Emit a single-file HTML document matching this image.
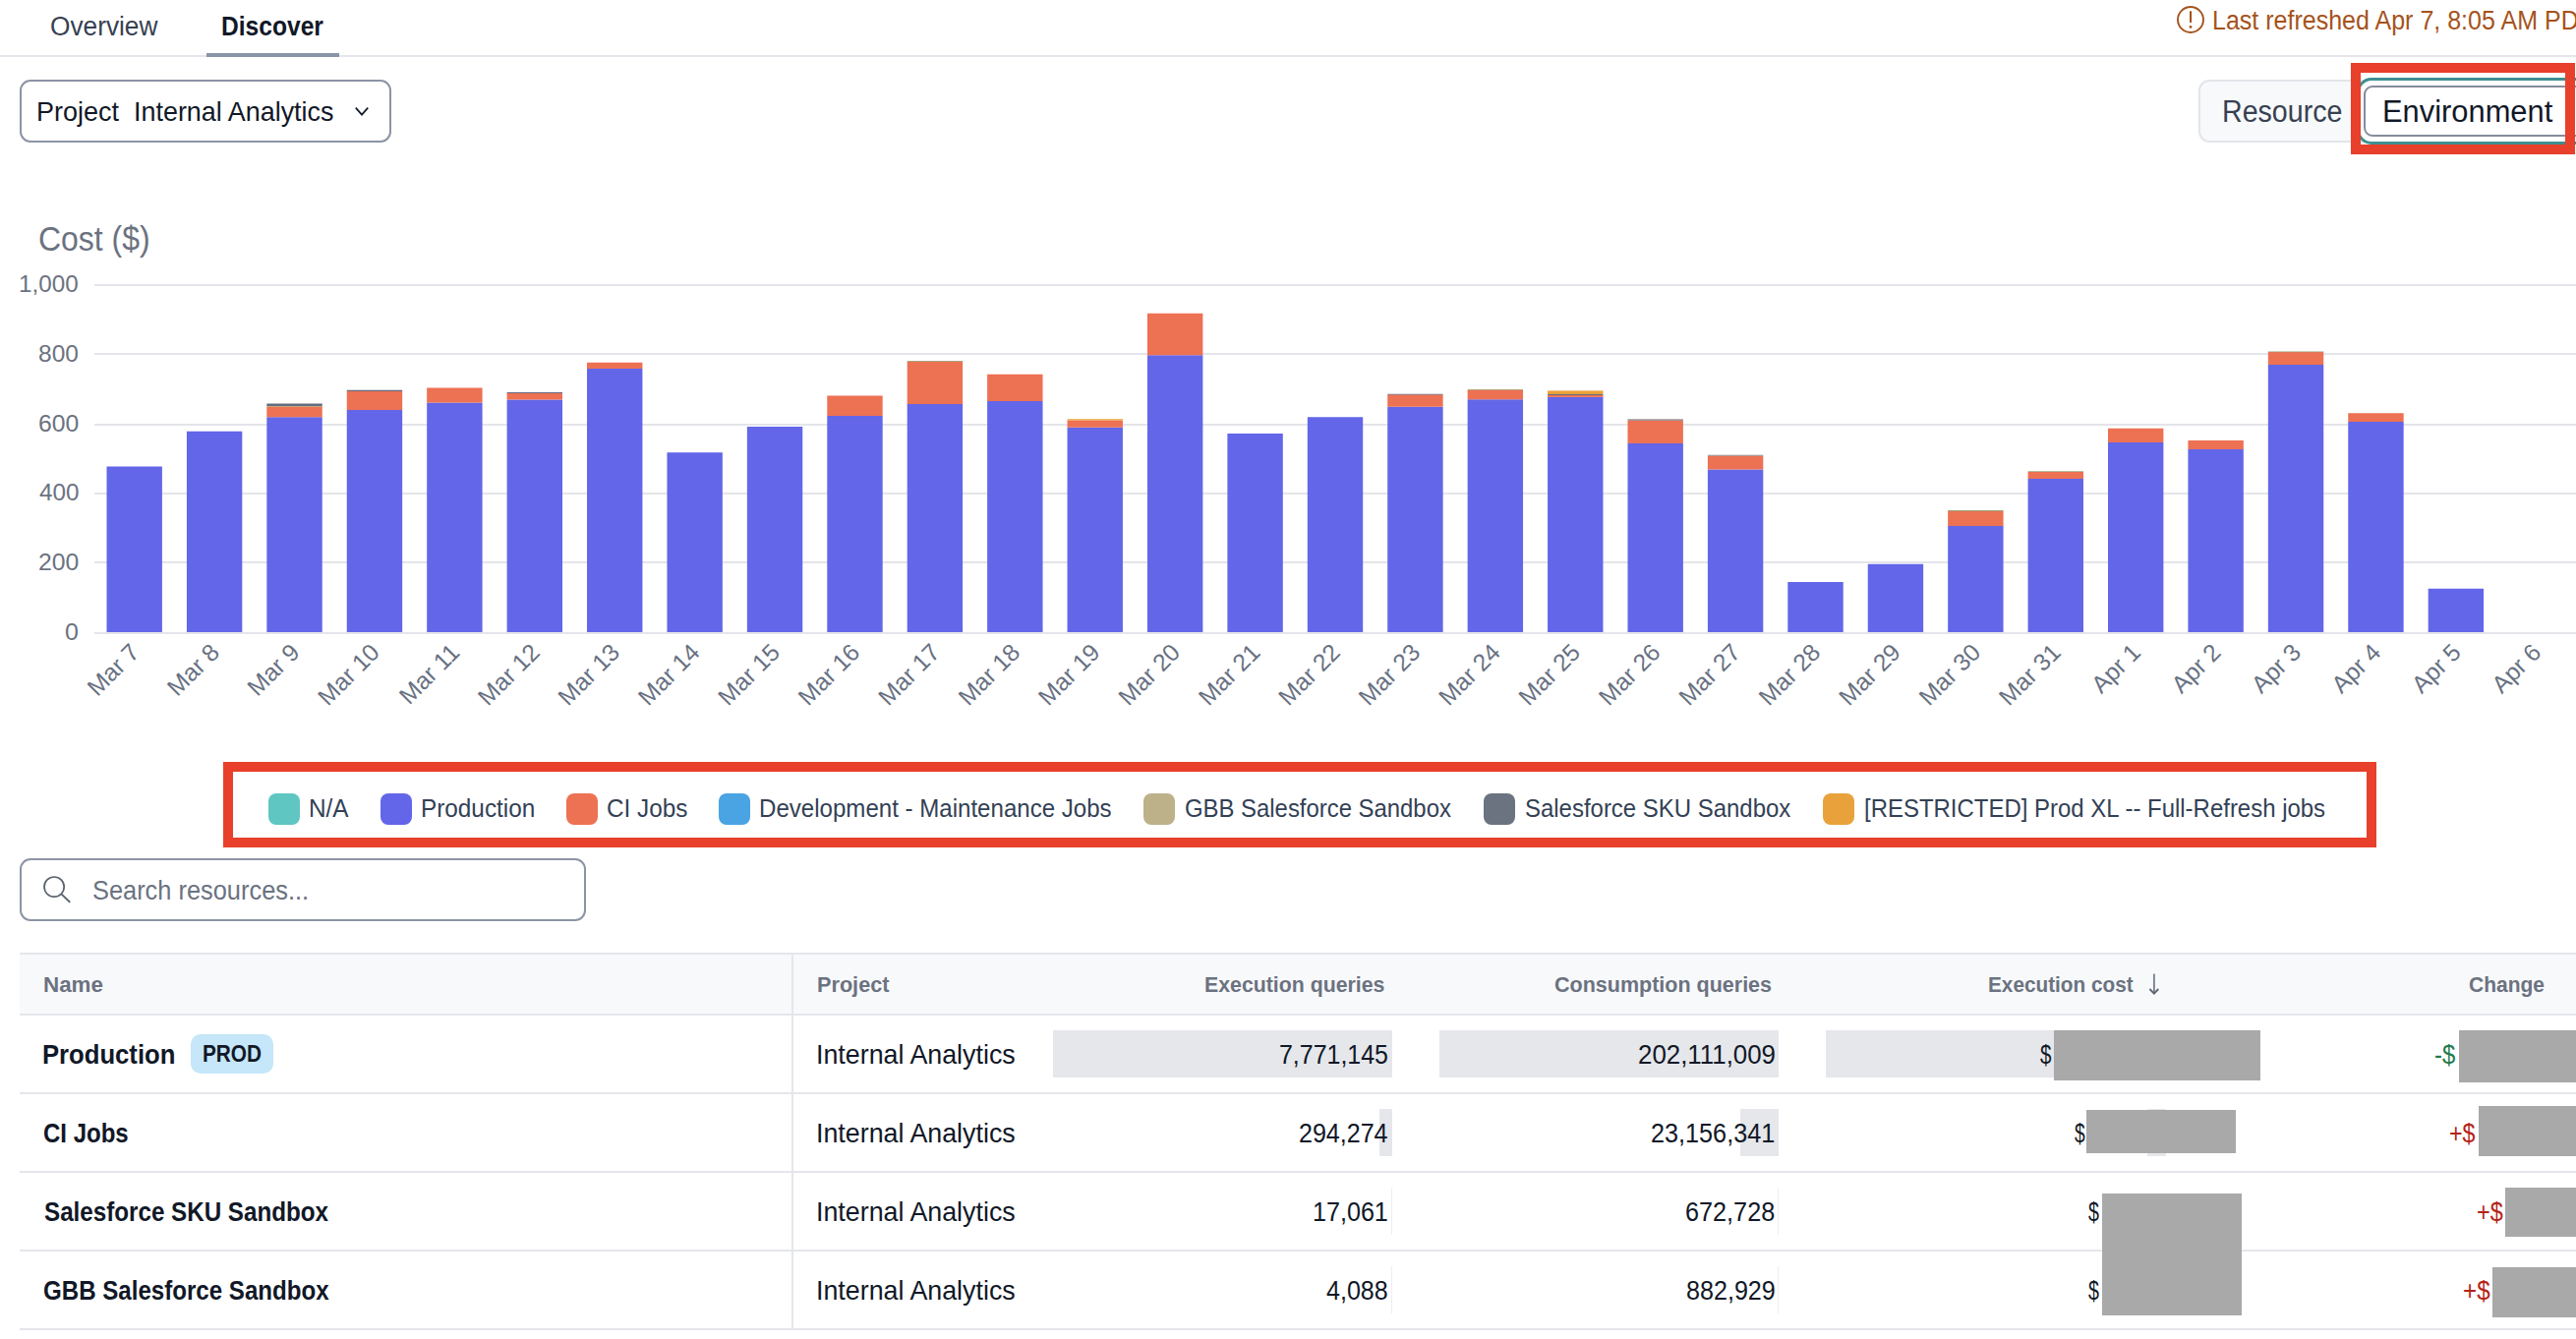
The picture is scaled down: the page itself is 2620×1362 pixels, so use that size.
<!DOCTYPE html>
<html><head><meta charset="utf-8"><title>Discover</title>
<style>
html,body{margin:0;padding:0;background:#fff;width:2620px;height:1362px;overflow:hidden;position:relative;font-family:'Liberation Sans', sans-serif;}
.b{position:absolute;}
.t{position:absolute;white-space:nowrap;transform-origin:0 0;}
.ic{position:absolute;overflow:visible}
.chart{position:absolute;left:0;top:0}
</style></head><body>
<div class="b" style="left:0px;top:56px;width:2620px;height:2px;background:#e4e6eb"></div><div class="b" style="left:210px;top:54px;width:135px;height:4px;background:#8a94a6"></div><div class="b" style="left:20px;top:81px;width:378px;height:64px;border:2px solid #8c94a4;border-radius:11px;box-sizing:border-box;background:#fff"></div><div class="b" style="left:2236px;top:81px;width:420px;height:64px;border:2px solid #e3e5e9;border-radius:11px;box-sizing:border-box;background:#f8f9fb"></div><div class="b" style="left:2397px;top:79px;width:243px;height:68px;border:3.6px solid #3f8f90;border-radius:15px;box-sizing:border-box;background:#fff"></div><div class="b" style="left:2404px;top:87px;width:232px;height:52px;border:2px solid #868c9c;border-radius:9px;box-sizing:border-box;background:#fff"></div><div class="b" style="left:2391px;top:64px;width:228px;height:93px;border:10px solid #e8402a;box-sizing:border-box"></div><div class="b" style="left:227px;top:775px;width:2190px;height:87px;border:10px solid #e8402a;box-sizing:border-box"></div><div class="b" style="left:273px;top:806.75px;width:32px;height:32px;background:#5fc6c2;border-radius:8px"></div><div class="b" style="left:387px;top:806.75px;width:32px;height:32px;background:#6366e8;border-radius:8px"></div><div class="b" style="left:576.25px;top:806.75px;width:32px;height:32px;background:#ed7153;border-radius:8px"></div><div class="b" style="left:731.25px;top:806.75px;width:32px;height:32px;background:#4aa3e3;border-radius:8px"></div><div class="b" style="left:1163px;top:806.75px;width:32px;height:32px;background:#bcb188;border-radius:8px"></div><div class="b" style="left:1509.25px;top:806.75px;width:32px;height:32px;background:#6b7280;border-radius:8px"></div><div class="b" style="left:1854.25px;top:806.75px;width:32px;height:32px;background:#e9a23b;border-radius:8px"></div><div class="b" style="left:20px;top:873px;width:576px;height:64px;border:2px solid #8c94a4;border-radius:11px;box-sizing:border-box;background:#fff"></div><div class="b" style="left:20px;top:971px;width:2600px;height:61px;background:#f8f9fb"></div><div class="b" style="left:20px;top:969px;width:2600px;height:2px;background:#e4e6eb"></div><div class="b" style="left:20px;top:1031px;width:2600px;height:2px;background:#e4e6eb"></div><div class="b" style="left:20px;top:1111px;width:2600px;height:2px;background:#e4e6eb"></div><div class="b" style="left:20px;top:1191px;width:2600px;height:2px;background:#e4e6eb"></div><div class="b" style="left:20px;top:1271px;width:2600px;height:2px;background:#e4e6eb"></div><div class="b" style="left:20px;top:1351px;width:2600px;height:2px;background:#e4e6eb"></div><div class="b" style="left:805px;top:971px;width:2px;height:381px;background:#e4e6eb"></div><div class="b" style="left:194px;top:1052px;width:84px;height:40px;background:#c6e6f9;border-radius:10px"></div><div class="b" style="left:1071px;top:1048px;width:345px;height:48px;background:#e5e7eb"></div><div class="b" style="left:1464px;top:1048px;width:345px;height:48px;background:#e5e7eb"></div><div class="b" style="left:1857px;top:1048px;width:442px;height:48px;background:#e5e7eb"></div><div class="b" style="left:1403px;top:1128px;width:13px;height:48px;background:#e5e7eb"></div><div class="b" style="left:1770px;top:1128px;width:39px;height:48px;background:#e5e7eb"></div><div class="b" style="left:2184px;top:1128px;width:19px;height:48px;background:#e5e7eb"></div><div class="b" style="left:1414.5px;top:1208px;width:1px;height:48px;background:#eceef1"></div><div class="b" style="left:1808px;top:1208px;width:1px;height:48px;background:#eceef1"></div><div class="b" style="left:1415px;top:1288px;width:1px;height:48px;background:#eceef1"></div><div class="b" style="left:1808px;top:1288px;width:1px;height:48px;background:#eceef1"></div><div class="b" style="left:2089px;top:1048px;width:210px;height:51px;background:#a9a9a9"></div><div class="b" style="left:2501px;top:1048px;width:119px;height:53px;background:#a9a9a9"></div><div class="b" style="left:2122px;top:1129px;width:152px;height:44px;background:#a9a9a9"></div><div class="b" style="left:2521px;top:1125px;width:99px;height:51px;background:#a9a9a9"></div><div class="b" style="left:2138px;top:1214px;width:142px;height:124px;background:#a9a9a9"></div><div class="b" style="left:2548px;top:1208px;width:72px;height:50px;background:#a9a9a9"></div><div class="b" style="left:2535px;top:1289px;width:85px;height:51px;background:#a9a9a9"></div>
<svg class="chart" width="2620" height="720" viewBox="0 0 2620 720"><g font-family="Liberation Sans, sans-serif" font-size="23.5" fill="#687182"><rect x="96" y="289" width="2524" height="2" fill="#e4e5ea"/><rect x="96" y="359" width="2524" height="2" fill="#e4e5ea"/><rect x="96" y="431" width="2524" height="2" fill="#e4e5ea"/><rect x="96" y="501" width="2524" height="2" fill="#e4e5ea"/><rect x="96" y="571" width="2524" height="2" fill="#e4e5ea"/><rect x="108.50" y="474.50" width="56.4" height="168.50" fill="#6366e8"/><rect x="189.92" y="438.75" width="56.4" height="204.25" fill="#6366e8"/><rect x="271.34" y="424.25" width="56.4" height="218.75" fill="#6366e8"/><rect x="271.34" y="413.50" width="56.4" height="10.75" fill="#ed7153"/><rect x="271.34" y="410.50" width="56.4" height="2.50" fill="#636b7e"/><rect x="271.34" y="413.00" width="56.4" height="1.00" fill="#c9a77a"/><rect x="352.76" y="417.00" width="56.4" height="226.00" fill="#6366e8"/><rect x="352.76" y="398.00" width="56.4" height="19.00" fill="#ed7153"/><rect x="352.76" y="396.75" width="56.4" height="1.25" fill="#636b7e"/><rect x="434.18" y="409.50" width="56.4" height="233.50" fill="#6366e8"/><rect x="434.18" y="394.50" width="56.4" height="15.00" fill="#ed7153"/><rect x="515.60" y="406.50" width="56.4" height="236.50" fill="#6366e8"/><rect x="515.60" y="400.00" width="56.4" height="6.50" fill="#ed7153"/><rect x="515.60" y="399.00" width="56.4" height="1.00" fill="#636b7e"/><rect x="597.02" y="375.00" width="56.4" height="268.00" fill="#6366e8"/><rect x="597.02" y="368.75" width="56.4" height="6.25" fill="#ed7153"/><rect x="678.44" y="460.25" width="56.4" height="182.75" fill="#6366e8"/><rect x="759.86" y="434.00" width="56.4" height="209.00" fill="#6366e8"/><rect x="841.28" y="423.00" width="56.4" height="220.00" fill="#6366e8"/><rect x="841.28" y="402.50" width="56.4" height="20.50" fill="#ed7153"/><rect x="922.70" y="411.00" width="56.4" height="232.00" fill="#6366e8"/><rect x="922.70" y="367.50" width="56.4" height="43.50" fill="#ed7153"/><rect x="922.70" y="367.00" width="56.4" height="0.80" fill="#9aa27a"/><rect x="1004.12" y="408.00" width="56.4" height="235.00" fill="#6366e8"/><rect x="1004.12" y="380.75" width="56.4" height="27.25" fill="#ed7153"/><rect x="1085.54" y="434.75" width="56.4" height="208.25" fill="#6366e8"/><rect x="1085.54" y="427.50" width="56.4" height="7.25" fill="#ed7153"/><rect x="1085.54" y="426.25" width="56.4" height="1.25" fill="#e9a23b"/><rect x="1166.96" y="361.25" width="56.4" height="281.75" fill="#6366e8"/><rect x="1166.96" y="318.75" width="56.4" height="42.50" fill="#ed7153"/><rect x="1248.38" y="441.00" width="56.4" height="202.00" fill="#6366e8"/><rect x="1329.80" y="424.25" width="56.4" height="218.75" fill="#6366e8"/><rect x="1411.22" y="413.75" width="56.4" height="229.25" fill="#6366e8"/><rect x="1411.22" y="401.25" width="56.4" height="12.50" fill="#ed7153"/><rect x="1411.22" y="400.75" width="56.4" height="0.75" fill="#636b7e"/><rect x="1492.64" y="406.25" width="56.4" height="236.75" fill="#6366e8"/><rect x="1492.64" y="397.00" width="56.4" height="9.25" fill="#ed7153"/><rect x="1492.64" y="396.00" width="56.4" height="1.00" fill="#b9a27a"/><rect x="1574.06" y="403.90" width="56.4" height="239.10" fill="#6366e8"/><rect x="1574.06" y="402.00" width="56.4" height="1.90" fill="#ed7153"/><rect x="1574.06" y="401.00" width="56.4" height="1.00" fill="#636b7e"/><rect x="1574.06" y="397.40" width="56.4" height="3.60" fill="#e9a23b"/><rect x="1655.48" y="451.00" width="56.4" height="192.00" fill="#6366e8"/><rect x="1655.48" y="427.90" width="56.4" height="23.10" fill="#ed7153"/><rect x="1655.48" y="426.30" width="56.4" height="1.60" fill="#9c8a8a"/><rect x="1736.90" y="477.50" width="56.4" height="165.50" fill="#6366e8"/><rect x="1736.90" y="463.80" width="56.4" height="13.70" fill="#ed7153"/><rect x="1736.90" y="462.70" width="56.4" height="1.10" fill="#9c8a8a"/><rect x="1818.32" y="592.00" width="56.4" height="51.00" fill="#6366e8"/><rect x="1899.74" y="573.75" width="56.4" height="69.25" fill="#6366e8"/><rect x="1981.16" y="535.00" width="56.4" height="108.00" fill="#6366e8"/><rect x="1981.16" y="520.00" width="56.4" height="15.00" fill="#ed7153"/><rect x="1981.16" y="519.00" width="56.4" height="1.00" fill="#9aa27a"/><rect x="2062.58" y="487.00" width="56.4" height="156.00" fill="#6366e8"/><rect x="2062.58" y="480.00" width="56.4" height="7.00" fill="#ed7153"/><rect x="2062.58" y="479.30" width="56.4" height="0.70" fill="#9aa27a"/><rect x="2144.00" y="450.00" width="56.4" height="193.00" fill="#6366e8"/><rect x="2144.00" y="435.75" width="56.4" height="14.25" fill="#ed7153"/><rect x="2225.42" y="457.00" width="56.4" height="186.00" fill="#6366e8"/><rect x="2225.42" y="448.00" width="56.4" height="9.00" fill="#ed7153"/><rect x="2306.84" y="371.00" width="56.4" height="272.00" fill="#6366e8"/><rect x="2306.84" y="358.00" width="56.4" height="13.00" fill="#ed7153"/><rect x="2306.84" y="357.50" width="56.4" height="0.70" fill="#9aa27a"/><rect x="2388.26" y="429.00" width="56.4" height="214.00" fill="#6366e8"/><rect x="2388.26" y="420.25" width="56.4" height="8.75" fill="#ed7153"/><rect x="2469.68" y="598.75" width="56.4" height="44.25" fill="#6366e8"/><rect x="96" y="643" width="2524" height="2" fill="#e4e5ea"/><text x="143.20" y="665.0" font-size="24.5" text-anchor="end" transform="rotate(-45 143.20 665.0)">Mar 7</text><text x="224.62" y="665.0" font-size="24.5" text-anchor="end" transform="rotate(-45 224.62 665.0)">Mar 8</text><text x="306.04" y="665.0" font-size="24.5" text-anchor="end" transform="rotate(-45 306.04 665.0)">Mar 9</text><text x="387.46" y="665.0" font-size="24.5" text-anchor="end" transform="rotate(-45 387.46 665.0)">Mar 10</text><text x="468.88" y="665.0" font-size="24.5" text-anchor="end" transform="rotate(-45 468.88 665.0)">Mar 11</text><text x="550.30" y="665.0" font-size="24.5" text-anchor="end" transform="rotate(-45 550.30 665.0)">Mar 12</text><text x="631.72" y="665.0" font-size="24.5" text-anchor="end" transform="rotate(-45 631.72 665.0)">Mar 13</text><text x="713.14" y="665.0" font-size="24.5" text-anchor="end" transform="rotate(-45 713.14 665.0)">Mar 14</text><text x="794.56" y="665.0" font-size="24.5" text-anchor="end" transform="rotate(-45 794.56 665.0)">Mar 15</text><text x="875.98" y="665.0" font-size="24.5" text-anchor="end" transform="rotate(-45 875.98 665.0)">Mar 16</text><text x="957.40" y="665.0" font-size="24.5" text-anchor="end" transform="rotate(-45 957.40 665.0)">Mar 17</text><text x="1038.82" y="665.0" font-size="24.5" text-anchor="end" transform="rotate(-45 1038.82 665.0)">Mar 18</text><text x="1120.24" y="665.0" font-size="24.5" text-anchor="end" transform="rotate(-45 1120.24 665.0)">Mar 19</text><text x="1201.66" y="665.0" font-size="24.5" text-anchor="end" transform="rotate(-45 1201.66 665.0)">Mar 20</text><text x="1283.08" y="665.0" font-size="24.5" text-anchor="end" transform="rotate(-45 1283.08 665.0)">Mar 21</text><text x="1364.50" y="665.0" font-size="24.5" text-anchor="end" transform="rotate(-45 1364.50 665.0)">Mar 22</text><text x="1445.92" y="665.0" font-size="24.5" text-anchor="end" transform="rotate(-45 1445.92 665.0)">Mar 23</text><text x="1527.34" y="665.0" font-size="24.5" text-anchor="end" transform="rotate(-45 1527.34 665.0)">Mar 24</text><text x="1608.76" y="665.0" font-size="24.5" text-anchor="end" transform="rotate(-45 1608.76 665.0)">Mar 25</text><text x="1690.18" y="665.0" font-size="24.5" text-anchor="end" transform="rotate(-45 1690.18 665.0)">Mar 26</text><text x="1771.60" y="665.0" font-size="24.5" text-anchor="end" transform="rotate(-45 1771.60 665.0)">Mar 27</text><text x="1853.02" y="665.0" font-size="24.5" text-anchor="end" transform="rotate(-45 1853.02 665.0)">Mar 28</text><text x="1934.44" y="665.0" font-size="24.5" text-anchor="end" transform="rotate(-45 1934.44 665.0)">Mar 29</text><text x="2015.86" y="665.0" font-size="24.5" text-anchor="end" transform="rotate(-45 2015.86 665.0)">Mar 30</text><text x="2097.28" y="665.0" font-size="24.5" text-anchor="end" transform="rotate(-45 2097.28 665.0)">Mar 31</text><text x="2178.70" y="665.0" font-size="24.5" text-anchor="end" transform="rotate(-45 2178.70 665.0)">Apr 1</text><text x="2260.12" y="665.0" font-size="24.5" text-anchor="end" transform="rotate(-45 2260.12 665.0)">Apr 2</text><text x="2341.54" y="665.0" font-size="24.5" text-anchor="end" transform="rotate(-45 2341.54 665.0)">Apr 3</text><text x="2422.96" y="665.0" font-size="24.5" text-anchor="end" transform="rotate(-45 2422.96 665.0)">Apr 4</text><text x="2504.38" y="665.0" font-size="24.5" text-anchor="end" transform="rotate(-45 2504.38 665.0)">Apr 5</text><text x="2585.80" y="665.0" font-size="24.5" text-anchor="end" transform="rotate(-45 2585.80 665.0)">Apr 6</text></g></svg>
<svg class="ic" style="left:2212px;top:4px" width="32" height="32" viewBox="0 0 32 32"><circle cx="16" cy="16" r="13" fill="none" stroke="#a5531c" stroke-width="1.9"/><rect x="15" y="7.3" width="2.1" height="11.6" fill="#a5531c"/><circle cx="16" cy="23.4" r="1.4" fill="#a5531c"/></svg><svg class="ic" style="left:356px;top:104px" width="24" height="20" viewBox="0 0 24 20"><path d="M5.8 5.6 L12 12.6 L18.2 5.6" fill="none" stroke="#111827" stroke-width="1.7"/></svg><svg class="ic" style="left:40px;top:886px" width="40" height="40" viewBox="0 0 40 40"><circle cx="15.1" cy="16.1" r="10.1" fill="none" stroke="#5b6270" stroke-width="1.7"/><path d="M22.4 23.4 L31.2 31.8" stroke="#5b6270" stroke-width="1.9"/></svg><svg class="ic" style="left:2180px;top:988px" width="24" height="28" viewBox="0 0 24 28"><path d="M10.9 2.6 L10.9 21.5" stroke="#7b8290" stroke-width="1.9"/><path d="M6.4 18.0 L10.9 22.6 L15.3 18.0" fill="none" stroke="#5f6775" stroke-width="1.9"/></svg>
<span class="t" style="left:51.27px;top:13.50px;font-size:27px;line-height:27px;color:#374151;font-weight:normal;transform:scaleX(0.9723);">Overview</span><span class="t" style="left:225.46px;top:13.50px;font-size:27px;line-height:27px;color:#111827;font-weight:bold;transform:scaleX(0.9108);">Discover</span><span class="t" style="left:36.89px;top:99.50px;font-size:28px;line-height:28px;color:#111827;font-weight:normal;transform:scaleX(0.9641);">Project</span><span class="t" style="left:135.90px;top:99.50px;font-size:28px;line-height:28px;color:#111827;font-weight:normal;transform:scaleX(0.9612);">Internal Analytics</span><span class="t" style="left:2249.95px;top:8.30px;font-size:27px;line-height:27px;color:#a5531c;font-weight:normal;transform:scaleX(0.9266);">Last refreshed Apr 7, 8:05 AM PDT</span><span class="t" style="left:2260.27px;top:99.40px;font-size:30.8px;line-height:30.8px;color:#374151;font-weight:normal;transform:scaleX(0.9285);">Resource</span><span class="t" style="left:2422.59px;top:99.40px;font-size:30.8px;line-height:30.8px;color:#111827;font-weight:normal;transform:scaleX(1.0023);">Environment</span><span class="t" style="left:39.00px;top:226.05px;font-size:35.5px;line-height:35.5px;color:#6b7280;font-weight:normal;transform:scaleX(0.9003);">Cost ($)</span><span class="t" style="left:19.49px;top:276.50px;font-size:24px;line-height:24px;color:#6b7280;font-weight:normal;transform:scaleX(1.0093);">1,000</span><span class="t" style="left:39.23px;top:347.50px;font-size:24px;line-height:24px;color:#6b7280;font-weight:normal;transform:scaleX(1.0208);">800</span><span class="t" style="left:38.84px;top:418.50px;font-size:24px;line-height:24px;color:#6b7280;font-weight:normal;transform:scaleX(1.0308);">600</span><span class="t" style="left:39.62px;top:489.00px;font-size:24px;line-height:24px;color:#6b7280;font-weight:normal;transform:scaleX(1.0110);">400</span><span class="t" style="left:38.84px;top:559.50px;font-size:24px;line-height:24px;color:#6b7280;font-weight:normal;transform:scaleX(1.0308);">200</span><span class="t" style="left:66.22px;top:630.50px;font-size:24px;line-height:24px;color:#6b7280;font-weight:normal;transform:scaleX(1.0417);">0</span><span class="t" style="left:314.35px;top:809.75px;font-size:25px;line-height:25px;color:#334155;font-weight:normal;transform:scaleX(0.9725);">N/A</span><span class="t" style="left:428.10px;top:809.75px;font-size:25px;line-height:25px;color:#334155;font-weight:normal;transform:scaleX(0.9728);">Production</span><span class="t" style="left:617.11px;top:809.75px;font-size:25px;line-height:25px;color:#334155;font-weight:normal;transform:scaleX(0.9722);">CI Jobs</span><span class="t" style="left:772.12px;top:809.75px;font-size:25px;line-height:25px;color:#334155;font-weight:normal;transform:scaleX(0.9630);">Development - Maintenance Jobs</span><span class="t" style="left:1205.13px;top:809.75px;font-size:25px;line-height:25px;color:#334155;font-weight:normal;transform:scaleX(0.9555);">GBB Salesforce Sandbox</span><span class="t" style="left:1551.00px;top:809.75px;font-size:25px;line-height:25px;color:#334155;font-weight:normal;transform:scaleX(0.9580);">Salesforce SKU Sandbox</span><span class="t" style="left:1895.50px;top:809.75px;font-size:25px;line-height:25px;color:#334155;font-weight:normal;transform:scaleX(0.9584);">[RESTRICTED] Prod XL -- Full-Refresh jobs</span><span class="t" style="left:94.21px;top:891.50px;font-size:28px;line-height:28px;color:#6b7280;font-weight:normal;transform:scaleX(0.9066);">Search resources...</span><span class="t" style="left:43.60px;top:990.50px;font-size:22px;line-height:22px;color:#6b7280;font-weight:bold;transform:scaleX(1.0173);">Name</span><span class="t" style="left:830.65px;top:990.50px;font-size:22px;line-height:22px;color:#6b7280;font-weight:bold;transform:scaleX(0.9849);">Project</span><span class="t" style="left:1224.92px;top:990.50px;font-size:22px;line-height:22px;color:#6b7280;font-weight:bold;transform:scaleX(0.9680);">Execution queries</span><span class="t" style="left:1581.08px;top:990.50px;font-size:22px;line-height:22px;color:#6b7280;font-weight:bold;transform:scaleX(0.9775);">Consumption queries</span><span class="t" style="left:2022.20px;top:990.50px;font-size:22px;line-height:22px;color:#6b7280;font-weight:bold;transform:scaleX(0.9436);">Execution cost</span><span class="t" style="left:2510.84px;top:990.50px;font-size:22px;line-height:22px;color:#6b7280;font-weight:bold;transform:scaleX(0.9536);">Change</span><span class="t" style="left:43.40px;top:1059.00px;font-size:28px;line-height:28px;color:#111827;font-weight:bold;transform:scaleX(0.9159);">Production</span><span class="t" style="left:829.91px;top:1059.00px;font-size:28px;line-height:28px;color:#111827;font-weight:normal;transform:scaleX(0.9576);">Internal Analytics</span><span class="t" style="left:1300.83px;top:1059.00px;font-size:28px;line-height:28px;color:#111827;font-weight:normal;transform:scaleX(0.8905);">7,771,145</span><span class="t" style="left:1665.54px;top:1059.00px;font-size:28px;line-height:28px;color:#111827;font-weight:normal;transform:scaleX(0.9238);">202,111,009</span><span class="t" style="left:44.25px;top:1139.00px;font-size:28px;line-height:28px;color:#111827;font-weight:bold;transform:scaleX(0.8575);">CI Jobs</span><span class="t" style="left:829.91px;top:1139.00px;font-size:28px;line-height:28px;color:#111827;font-weight:normal;transform:scaleX(0.9576);">Internal Analytics</span><span class="t" style="left:1320.83px;top:1139.00px;font-size:28px;line-height:28px;color:#111827;font-weight:normal;transform:scaleX(0.8946);">294,274</span><span class="t" style="left:1679.32px;top:1139.00px;font-size:28px;line-height:28px;color:#111827;font-weight:normal;transform:scaleX(0.9006);">23,156,341</span><span class="t" style="left:44.62px;top:1219.00px;font-size:28px;line-height:28px;color:#111827;font-weight:bold;transform:scaleX(0.8638);">Salesforce SKU Sandbox</span><span class="t" style="left:829.91px;top:1219.00px;font-size:28px;line-height:28px;color:#111827;font-weight:normal;transform:scaleX(0.9576);">Internal Analytics</span><span class="t" style="left:1334.93px;top:1219.00px;font-size:28px;line-height:28px;color:#111827;font-weight:normal;transform:scaleX(0.8972);">17,061</span><span class="t" style="left:1714.32px;top:1219.00px;font-size:28px;line-height:28px;color:#111827;font-weight:normal;transform:scaleX(0.9011);">672,728</span><span class="t" style="left:44.25px;top:1299.00px;font-size:28px;line-height:28px;color:#111827;font-weight:bold;transform:scaleX(0.8606);">GBB Salesforce Sandbox</span><span class="t" style="left:829.91px;top:1299.00px;font-size:28px;line-height:28px;color:#111827;font-weight:normal;transform:scaleX(0.9576);">Internal Analytics</span><span class="t" style="left:1349.11px;top:1299.00px;font-size:28px;line-height:28px;color:#111827;font-weight:normal;transform:scaleX(0.8942);">4,088</span><span class="t" style="left:1714.71px;top:1299.00px;font-size:28px;line-height:28px;color:#111827;font-weight:normal;transform:scaleX(0.8971);">882,929</span><span class="t" style="left:205.70px;top:1060.00px;font-size:24px;line-height:24px;color:#111827;font-weight:bold;transform:scaleX(0.8656);">PROD</span><span class="t" style="left:2074.75px;top:1059.00px;font-size:28px;line-height:28px;color:#111827;font-weight:normal;transform:scaleX(0.7347);">$</span><span class="t" style="left:2110.00px;top:1139.00px;font-size:28px;line-height:28px;color:#111827;font-weight:normal;transform:scaleX(0.6857);">$</span><span class="t" style="left:2123.50px;top:1219.00px;font-size:28px;line-height:28px;color:#111827;font-weight:normal;transform:scaleX(0.7020);">$</span><span class="t" style="left:2123.50px;top:1299.00px;font-size:28px;line-height:28px;color:#111827;font-weight:normal;transform:scaleX(0.7020);">$</span><span class="t" style="left:2476.00px;top:1059.00px;font-size:28px;line-height:28px;color:#1f7a4d;font-weight:normal;transform:scaleX(0.8522);">-$</span><span class="t" style="left:2490.66px;top:1139.00px;font-size:28px;line-height:28px;color:#b42318;font-weight:normal;transform:scaleX(0.8319);">+$</span><span class="t" style="left:2519.40px;top:1219.00px;font-size:28px;line-height:28px;color:#b42318;font-weight:normal;transform:scaleX(0.8402);">+$</span><span class="t" style="left:2504.86px;top:1299.00px;font-size:28px;line-height:28px;color:#b42318;font-weight:normal;transform:scaleX(0.8649);">+$</span>
</body></html>
